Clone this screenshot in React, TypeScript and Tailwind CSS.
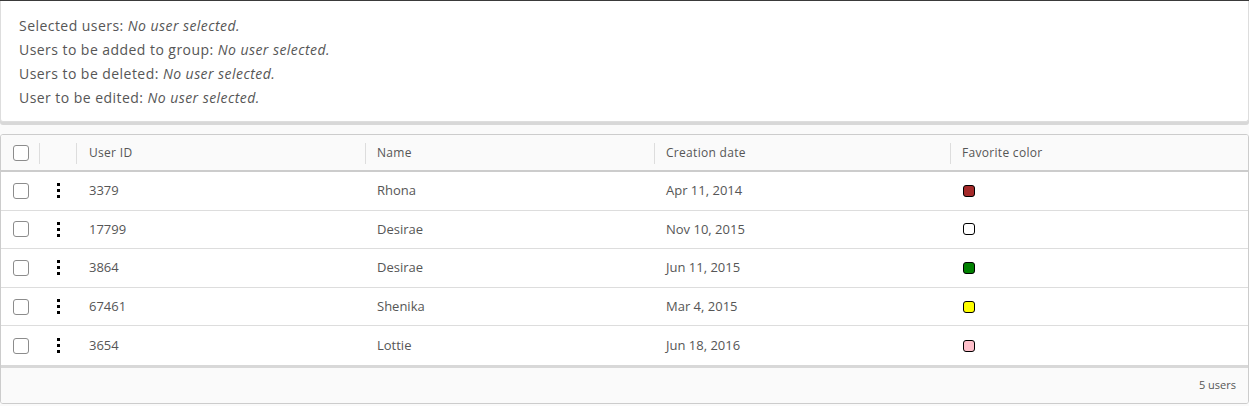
import React from "react";

const rows = [
  { id: "3379", name: "Rhona", date: "Apr 11, 2014", color: "#a52a2a" },
  { id: "17799", name: "Desirae", date: "Nov 10, 2015", color: "#ffffff" },
  { id: "3864", name: "Desirae", date: "Jun 11, 2015", color: "#008000" },
  { id: "67461", name: "Shenika", date: "Mar 4, 2015", color: "#ffff00" },
  { id: "3654", name: "Lottie", date: "Jun 18, 2016", color: "#ffc0cb" },
];

function Checkbox() {
  return <div className="w-4 h-4 rounded-[3px] border border-[#8c8c8c] bg-white" />;
}

function Dots() {
  return (
    <div className="flex flex-col items-center gap-[3px]">
      <span className="w-[3px] h-[3px] bg-black" />
      <span className="w-[3px] h-[3px] bg-black" />
      <span className="w-[3px] h-[3px] bg-black" />
    </div>
  );
}

const Sep = () => <span className="absolute left-0 top-[7px] h-[21px] w-px bg-[#ddd]" />;

export default function App() {
  return (
    <div className="w-[1249px] h-[406px] bg-[#fafafa] text-[#565656] overflow-hidden" style={{ fontFamily: "'Open Sans', 'Noto Sans', sans-serif" }}>
      <div className="h-px bg-[#3a3a3a]" />
      <div className="bg-white border border-t-0 border-[#ddd] rounded-b-[3px] shadow-[0_3px_0_0_#d8d8d8] px-[18px] pt-[13px] pb-[11px] text-[14px] tracking-[0.45px] leading-6 text-[#565656]">
        <div>Selected users: <i>No user selected.</i></div>
        <div>Users to be added to group: <i>No user selected.</i></div>
        <div>Users to be deleted: <i>No user selected.</i></div>
        <div>User to be edited: <i>No user selected.</i></div>
      </div>
      <div className="mt-[12px] border border-[#ccc] rounded-[3px] bg-white overflow-hidden">
        <div className="flex h-[37px] pt-px bg-[#fafafa] border-b-2 border-[#ccc] text-[12px] tracking-[0.3px] font-medium text-[#565656] items-stretch">
          <div className="w-[38px] flex items-center justify-center pl-px"><Checkbox /></div>
          <div className="w-[37px] relative"><Sep /></div>
          <div className="w-[289px] relative flex items-center pl-[13px]"><Sep />User ID</div>
          <div className="w-[289px] relative flex items-center pl-[12px]"><Sep />Name</div>
          <div className="w-[296px] relative flex items-center pl-[12px]"><Sep />Creation date</div>
          <div className="flex-1 relative flex items-center pl-[12px]"><Sep />Favorite color</div>
        </div>
        {rows.map((r, i) => (
          <div key={r.id} className={`flex h-[38.6px] items-center text-[13px] ${i < rows.length - 1 ? "border-b border-[#ddd]" : ""}`}>
            <div className="w-[38px] flex items-center justify-center pl-px"><Checkbox /></div>
            <div className="w-[37px] flex items-center justify-center pl-[2px]"><Dots /></div>
            <div className="w-[289px] pl-[13px]">{r.id}</div>
            <div className="w-[289px] pl-[12px]">{r.name}</div>
            <div className="w-[296px] pl-[12px]">{r.date}</div>
            <div className="flex-1 pl-[13px]">
              <div className="w-3 h-3 rounded-[3px] border border-black" style={{ backgroundColor: r.color }} />
            </div>
          </div>
        ))}
        <div className="h-[38px] border-t-[3px] border-[#d8d8d8] bg-[#fafafa] flex items-center justify-end pr-3 text-[11px]">5 users</div>
      </div>
    </div>
  );
}
